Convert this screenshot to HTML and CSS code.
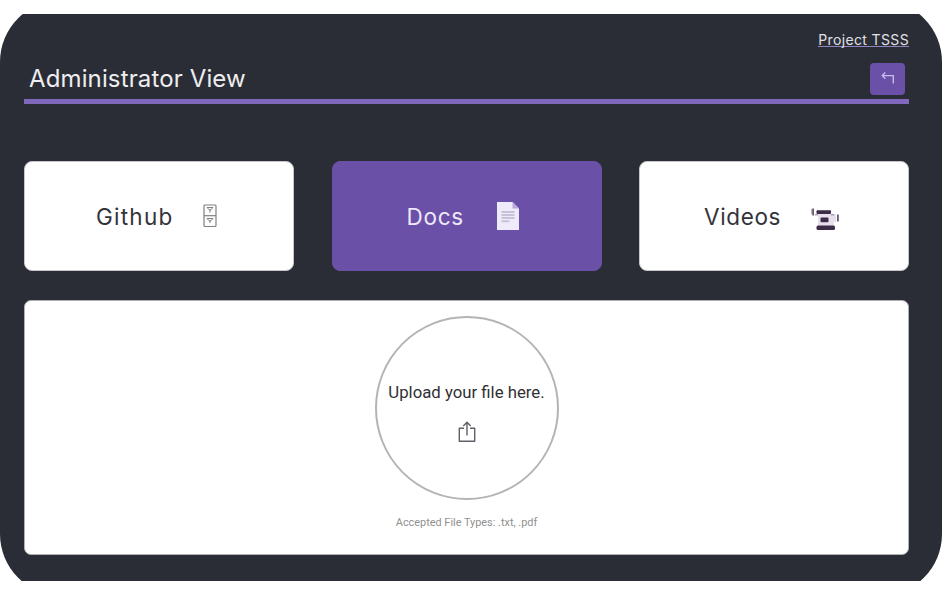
FILE: index.html
```html
<!DOCTYPE html>
<html lang="en">
<head>
<meta charset="utf-8">
<title>Administrator View</title>
<link rel="stylesheet" href="styles.css">
</head>
<body>
<div class="screen">
  <div class="topline"><a class="project"><span>Project TSSS</span></a></div>
  <header class="header">
    <h1 class="title">Administrator View</h1>
    <button class="back" aria-label="Back">
      <svg width="16" height="16" viewBox="0 0 16 16" fill="none" stroke="#c9baea" stroke-width="1.4"><path d="M5.3 1.5 2.3 4.6 5.3 7.7M2.5 4.6H13.3V12.5"/></svg>
    </button>
  </header>
  <nav class="cards">
    <a class="card github"><span class="label">Github</span>
      <svg class="icon" width="14" height="24" viewBox="0 0 14 24" fill="none" stroke="#808080" stroke-width="1.2"><rect x="1" y="1" width="12" height="21.5" rx="1"/><path d="M1 11.7H13"/><path d="M4 3.5H10L7 6.5ZM7 5V8.5M4 14.5H10L7 17.5ZM7 16V19" stroke-width="1"/></svg>
    </a>
    <a class="card docs"><span class="label">Docs</span>
      <svg class="icon" width="22" height="28" viewBox="0 0 22 28"><path d="M0 0H15.5L22 6.5V28H0Z" fill="#f0ebfa"/><path d="M15.5 0V6.5H22Z" fill="#b9a9dc"/><path d="M4.5 10H17.5M4.5 13H17.5M4.5 16H17.5M4.5 19.3H12.5" stroke="#c8c2d8" stroke-width="2"/></svg>
    </a>
    <a class="card videos"><span class="label">Videos</span>
      <svg class="icon" width="29" height="24" viewBox="0 0 29 24"><path d="M6 3H20V7H25V15H23V19H7V8H6Z" fill="#e7e0ec"/><path d="M0 2H.8V7H0Z" fill="#a79cad"/><path d="M1.2 1.5H3V8.5H1.2ZM26 7.5H27.8V14.5H26Z" fill="#67596f"/><rect x="5.5" y="3.3" width="14.5" height="3.8" rx="1" fill="#3c2c48"/><rect x="9.5" y="10.5" width="8" height="4.8" rx="1" fill="#3c2c48"/><path d="M4 7.8H7M20 7.8H23" stroke="#87798f"/><rect x="5.5" y="18.4" width="18.5" height="4.6" rx="1.5" fill="#3c2c48"/></svg>
    </a>
  </nav>
  <main class="panel">
    <div class="drop">
      <span class="upload">Upload your file here.</span>
      <svg width="18" height="22" viewBox="0 0 18 22" fill="none" stroke="#606068" stroke-width="1.4" stroke-linejoin="round"><path d="M6 7.3H1.3V20.3H16.7V7.3H12M9 14.5V1.5M5.3 5 9 1.3 12.7 5"/></svg>
    </div>
    <p class="types">Accepted File Types: .txt, .pdf</p>
  </main>
</div>
</body>
</html>
```
FILE: styles.css
```css
* { box-sizing: border-box; }
body { margin: 0; background: #fff; font-family: Inter, sans-serif; }
.screen {
  height: 596px;
  padding: 30px 33px 0 24px;
  background: #2a2d35;
  border-radius: 62px;
  clip-path: inset(14px 0 15px);
}
.topline { height: 33px; display: flex; justify-content: flex-end; }
.project {
  height: 17px;
  border-bottom: 1px solid #9085bd;
  color: #e0e0e5;
  font-size: 14px;
  line-height: 20px;
  letter-spacing: 0.36px;
}
.header {
  height: 41px;
  display: flex;
  justify-content: space-between;
  padding: 0 4px 0 5px;
  border-bottom: 5px solid #8069bd;
}
.title {
  margin: 0;
  color: #eeeef0;
  font-size: 24px;
  font-weight: 400;
  line-height: 32px;
  letter-spacing: 0.13px;
  white-space: nowrap;
}
.back {
  width: 35px;
  height: 32px;
  padding: 0;
  display: flex;
  align-items: center;
  justify-content: center;
  border: 0;
  border-radius: 4px;
  background: #6a50a7;
}
.cards {
  margin-top: 57px;
  display: grid;
  grid-template-columns: repeat(3, 270px);
  justify-content: space-between;
}
.card {
  height: 110px;
  display: flex;
  align-items: center;
  border: 1px solid #c6c7ca;
  border-radius: 8px;
  background: #fff;
  color: #33333a;
  font-size: 22.5px;
}
.card.docs { background: #6a50a7; border-color: #6a50a7; color: #eee7fa; }
.label { white-space: nowrap; }
.github { padding-left: 71px; }
.github .label { width: 107px; letter-spacing: 1.25px; }
.docs { padding-left: 74px; }
.docs .label { width: 90px; letter-spacing: 0.7px; }
.videos { padding-left: 64px; }
.videos .label { width: 107px; letter-spacing: 0.65px; }
.videos .icon { margin-top: 5px; }
.panel {
  height: 255px;
  margin-top: 29px;
  padding-top: 15px;
  display: flex;
  flex-direction: column;
  align-items: center;
  border: 1px solid #b0b1b5;
  border-radius: 7px;
  background: #fff;
  font-family: Roboto, sans-serif;
}
.drop {
  width: 184px;
  height: 184px;
  padding-top: 64px;
  display: flex;
  flex-direction: column;
  align-items: center;
  gap: 19px;
  border: 2px solid #b4b4b4;
  border-radius: 50%;
}
.upload { color: #303034; font-size: 16.75px; line-height: 20px; white-space: nowrap; }
.types { margin: 14px 0 0; color: #909090; font-size: 10.9px; line-height: 17px; }
```
